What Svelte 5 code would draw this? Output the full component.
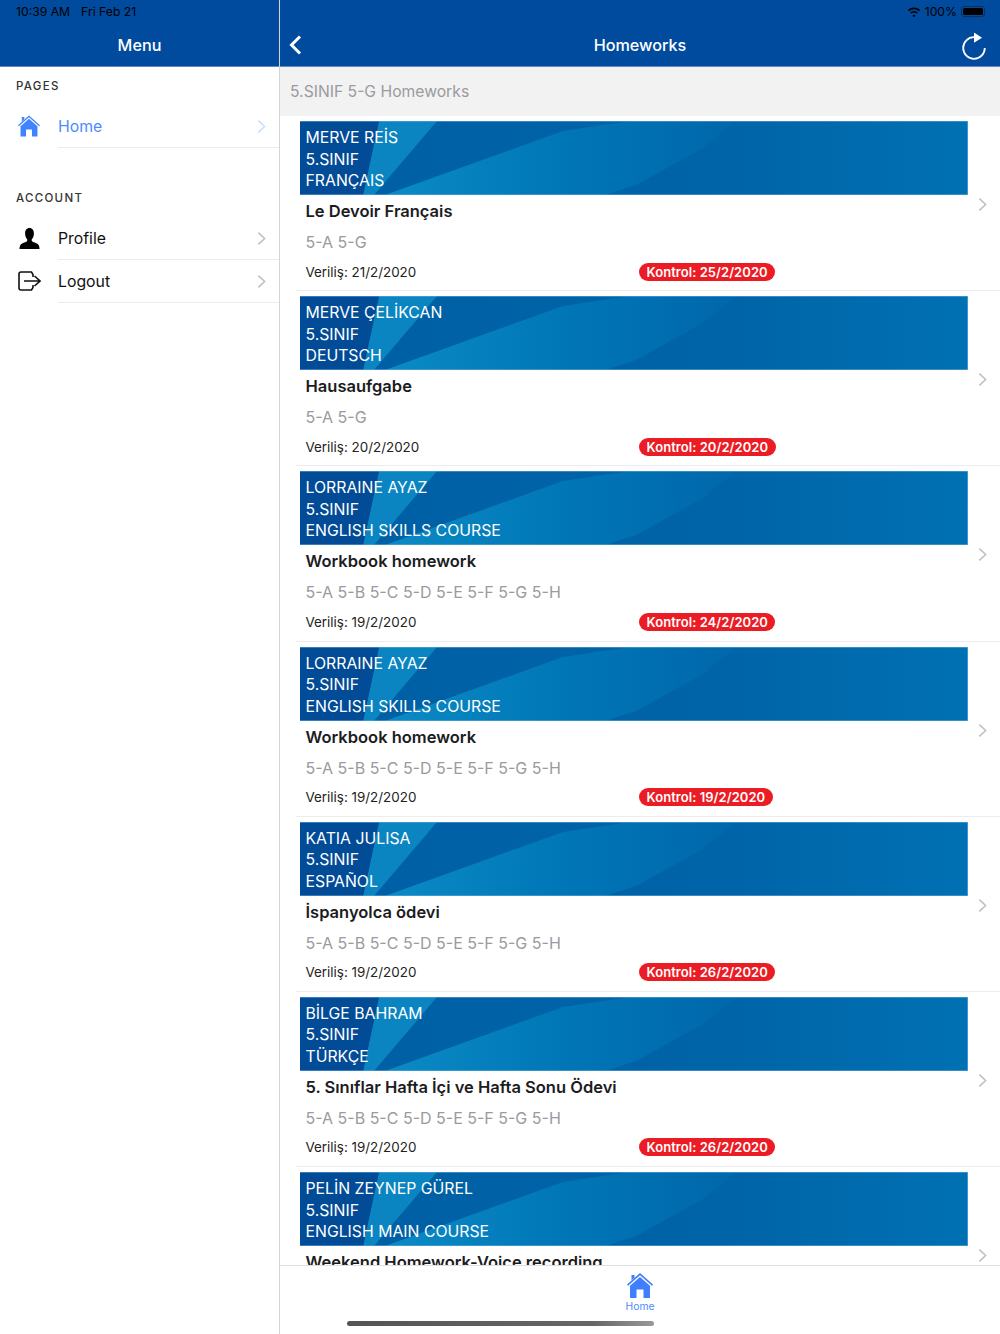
<script>
  const rows = [
    { teacher: 'MERVE REİS', course: 'FRANÇAIS', title: 'Le Devoir Français', classes: '5-A 5-G', given: '21/2/2020', due: '25/2/2020' },
    { teacher: 'MERVE ÇELİKCAN', course: 'DEUTSCH', title: 'Hausaufgabe', classes: '5-A 5-G', given: '20/2/2020', due: '20/2/2020' },
    { teacher: 'LORRAINE AYAZ', course: 'ENGLISH SKILLS COURSE', title: 'Workbook homework', classes: '5-A 5-B 5-C 5-D 5-E 5-F 5-G 5-H', given: '19/2/2020', due: '24/2/2020' },
    { teacher: 'LORRAINE AYAZ', course: 'ENGLISH SKILLS COURSE', title: 'Workbook homework', classes: '5-A 5-B 5-C 5-D 5-E 5-F 5-G 5-H', given: '19/2/2020', due: '19/2/2020' },
    { teacher: 'KATIA JULISA', course: 'ESPAÑOL', title: 'İspanyolca ödevi', classes: '5-A 5-B 5-C 5-D 5-E 5-F 5-G 5-H', given: '19/2/2020', due: '26/2/2020' },
    { teacher: 'BİLGE BAHRAM', course: 'TÜRKÇE', title: '5. Sınıflar Hafta İçi ve Hafta Sonu Ödevi', classes: '5-A 5-B 5-C 5-D 5-E 5-F 5-G 5-H', given: '19/2/2020', due: '26/2/2020' },
    { teacher: 'PELİN ZEYNEP GÜREL', course: 'ENGLISH MAIN COURSE', title: 'Weekend Homework-Voice recording', classes: '5-A 5-B 5-C 5-D 5-E 5-F 5-G 5-H', given: '19/2/2020', due: '26/2/2020' }
  ];
</script>

{#snippet chevron(cls)}
  <svg class={cls} viewBox="0 0 10 16" width="9" height="15" fill="none" stroke="currentColor" stroke-width="1.6"><path d="M1.5 1.5 8.5 8 1.5 14.5" /></svg>
{/snippet}

{#snippet house(cls)}
  <svg class={cls} viewBox="0 0 26 25" fill="currentColor">
    <path d="M4.5 2h3v2.6L4.5 7.4z" />
    <path d="M13 0 26 11.6l-1 1.2L13 2.200 1 12.800 0 11.600z" />
    <path d="M13 4 23 12.800V25H16.500V16.500h-7V25H3V12.800z" />
  </svg>
{/snippet}

<div class="app">
  <aside class="side">
    <header class="bar">
      <div class="status"><span class="time">10:39 AM</span><span>Fri Feb 21</span></div>
      <h1 class="bar-title">Menu</h1>
    </header>

    <div class="section first">PAGES</div>
    <div class="menu-item active">
      <span class="menu-icon">{@render house('icon-house')}</span>
      <div class="menu-body"><span>Home</span>{@render chevron('chev light')}</div>
    </div>

    <div class="section second">ACCOUNT</div>
    <div class="menu-item">
      <span class="menu-icon">
        <svg width="21" height="21" viewBox="0 0 22 22" fill="#000">
          <path d="M11 0c3 0 4.600 2.400 4.600 5.400 0 2.600-.8 4.800-2 6.200-.5.7-.4 2 .4 2.600 1.700 1.100 5.700 1.700 6.900 4.300.4.900.6 2 .6 3.500H.5c0-1.500.2-2.600.6-3.500 1.200-2.600 5.200-3.200 6.900-4.300.8-.6.9-1.900.4-2.600-1.200-1.400-2-3.600-2-6.200C6.400 2.400 8 0 11 0z" />
        </svg>
      </span>
      <div class="menu-body"><span>Profile</span>{@render chevron('chev')}</div>
    </div>
    <div class="menu-item">
      <span class="menu-icon">
        <svg width="23" height="20" viewBox="0 0 23 20" fill="none" stroke="#111" stroke-width="1.600">
          <path d="M15 6V3.500L13.500 1H3Q1 1 1 3V17Q1 19 3 19H13.500L15 16.500V14" />
          <path d="M6 10H21M16.500 5 22 10 16.500 15" />
        </svg>
      </span>
      <div class="menu-body"><span>Logout</span>{@render chevron('chev')}</div>
    </div>
  </aside>

  <main class="main">
    <header class="bar">
      <div class="status right">
        <svg width="14" height="10" viewBox="0 0 14 10" fill="#000">
          <path d="M7 7.500 8.600 9 7 10 5.400 9zM3.200 5.400a5.500 5.500 0 0 1 7.600 0L9.600 6.600a3.800 3.800 0 0 0-5.200 0zM.800 3.100a9 9 0 0 1 12.400 0L12 4.300a7.200 7.200 0 0 0-10 0z" />
        </svg>
        <span>100%</span>
        <span class="battery"><span class="battery-fill"></span></span>
      </div>
      <div class="nav">
        <svg class="back" width="13" height="20" viewBox="0 0 13 20" fill="none" stroke="#fff" stroke-width="3"><path d="M11 1.500 2.500 10 11 18.500" /></svg>
        <h1 class="bar-title">Homeworks</h1>
        <svg class="refresh" width="26" height="28" viewBox="0 0 26 28" fill="none">
          <path d="M13 5.200A10.800 10.800 0 1 0 23.800 16" stroke="#fff" stroke-width="1.800" />
          <path d="M13 .5 21 5.700 13 10.700z" fill="#fff" />
        </svg>
      </div>
    </header>

    <div class="sub">5.SINIF 5-G Homeworks</div>

    <div class="list">
      {#each rows as r}
        <article class="row">
          <div class="content">
            <div class="banner">
              <svg class="art" viewBox="0 0 668 74" preserveAspectRatio="none">
                <defs>
                  <linearGradient id="band" gradientUnits="userSpaceOnUse" x1="90" x2="440" y1="0" y2="0">
                    <stop offset="0" stop-color="#0a8ac5" />
                    <stop offset="0.5" stop-color="#0076b6" />
                    <stop offset="1" stop-color="#0067ab" />
                  </linearGradient>
                  <linearGradient id="base" x1="0" x2="1" y1="0" y2="0">
                    <stop offset="0" stop-color="#005fa6" />
                    <stop offset="0.65" stop-color="#0064a8" />
                    <stop offset="1" stop-color="#0071b3" />
                  </linearGradient>
                </defs>
                <rect width="668" height="74" fill="url(#base)" />
                <polygon points="85,74 263,10 330,0 436,0 403,27 336,64 305,74" fill="url(#band)" />
                <polygon points="79,0 137,0 74,74 63,74" fill="#0a85c1" />
                <polygon points="0,0 79,0 63,74 0,74" fill="#014b97" />
              </svg>
              <div class="banner-text">
                <div>{r.teacher}</div>
                <div>5.SINIF</div>
                <div>{r.course}</div>
              </div>
            </div>
            <div class="title">{r.title}</div>
            <div class="classes">{r.classes}</div>
            <div class="meta">
              <span class="given">Veriliş: {r.given}</span>
              <span class="badge">Kontrol: {r.due}</span>
            </div>
          </div>
          {@render chevron('chev row-chev')}
        </article>
      {/each}
    </div>

    <nav class="tabbar">
      <div class="tab">
        {@render house('tab-house')}
        <span>Home</span>
      </div>
      <div class="home-indicator"></div>
    </nav>
  </main>
</div>

<style>
  :global(body) { margin: 0; background: #fff; }
  .app {
    display: flex;
    width: 1000px;
    height: 1334px;
    overflow: hidden;
    font-family: Inter, "Noto Sans", sans-serif;
    color: #1a1a1a;
    background: #fff;
  }
  h1 { margin: 0; }

  .bar {
    height: 66px;
    background: #004b9d;
    border-bottom: 1px solid #5f8abf;
    flex: none;
    display: flex;
    flex-direction: column;
  }
  .status {
    height: 23px;
    display: flex;
    align-items: center;
    padding: 0 16px;
    font-size: 12.200px;
    color: #000;
    gap: 11px;
    flex: none;
  }
  .status.right { justify-content: flex-end; gap: 4px; padding: 0 15px 0 0; }
  .battery {
    width: 24px;
    height: 11px;
    border: 1px solid #0b2f63;
    border-radius: 3px;
    padding: 1px;
    box-sizing: border-box;
    display: flex;
  }
  .battery-fill { flex: 1; background: #000; border-radius: 1.500px; }
  .bar-title {
    font-size: 16.200px;
    font-weight: 500;
    color: #fff;
    text-align: center;
    line-height: 44px;
  }

  .side {
    width: 279px;
    flex: none;
    border-right: 1px solid #d4d4d6;
    position: relative;
  }
  .section {
    font-size: 11.500px;
    font-weight: 500;
    letter-spacing: 1.300px;
    color: #333;
    padding-left: 16px;
    line-height: 16px;
  }
  .section.first { margin-top: 11px; margin-bottom: 11px; }
  .section.second { margin-top: 42px; margin-bottom: 11px; }
  .menu-item {
    display: flex;
    height: 43px;
    font-size: 15.800px;
    color: #111;
  }
  .menu-item.active { color: #4c8cff; }
  .menu-icon {
    width: 58px;
    flex: none;
    display: flex;
    align-items: center;
    justify-content: center;
    box-sizing: border-box;
    padding-bottom: 1px;
  }
  .icon-house { width: 22px; height: 22px; color: #3f83ff; }
  .menu-body {
    flex: 1;
    display: flex;
    align-items: center;
    justify-content: space-between;
    border-bottom: 1px solid #ececee;
    padding-right: 13px;
  }
  .chev { color: #bdbdc2; flex: none; }
  .chev.light { color: #c8dcff; }

  .main {
    flex: 1;
    min-width: 0;
    display: flex;
    flex-direction: column;
  }
  .nav {
    flex: 1;
    display: flex;
    align-items: center;
    justify-content: center;
    position: relative;
    margin-top: -1px;
    padding-top: 1px;
  }
  .back { position: absolute; left: 9px; top: 13px; }
  .refresh { position: absolute; right: 13px; top: 10px; }

  .sub {
    flex: none;
    height: 49px;
    line-height: 49px;
    background: #f2f2f2;
    color: #9a9aa0;
    font-size: 15.700px;
    padding-left: 10px;
  }
  .list { flex: 1; min-height: 0; overflow: hidden; }
  .row {
    height: 175.200px;
    box-sizing: border-box;
    margin-left: 16px;
    padding: 5px 0 0 4px;
    border-bottom: 1px solid #ececee;
    display: flex;
    align-items: flex-start;
    position: relative;
  }
  .content { width: 668px; flex: none; }
  .row-chev { position: absolute; right: 13px; top: 81px; }
  .banner {
    height: 74px;
    position: relative;
    color: #fff;
    font-size: 15.800px;
    line-height: 21.500px;
  }
  .banner::after {
    content: "";
    position: absolute;
    inset: 0;
    box-shadow: inset 0 1px 0 rgba(110, 175, 225, .5), inset -1px 0 0 rgba(110, 175, 225, .6), inset 0 -1px 0 rgba(110, 175, 225, .5);
  }
  .art { position: absolute; inset: 0; width: 100%; height: 100%; display: block; }
  .banner-text { position: relative; padding: 6px 0 0 5.500px; }
  .title {
    font-size: 16.500px;
    font-weight: 600;
    line-height: 22px;
    padding: 5px 0 0 5.500px;
    color: #1c1c1e;
  }
  .classes {
    font-size: 16px;
    line-height: 22px;
    padding: 9px 0 0 5.500px;
    color: #9a9aa0;
  }
  .meta {
    display: flex;
    align-items: center;
    padding: 9px 0 0 5.500px;
    height: 19px;
  }
  .given { font-size: 13.400px; width: 333.500px; flex: none; color: #222; }
  .badge {
    background: #ec1c24;
    color: #fff;
    font-size: 13px;
    font-weight: 600;
    letter-spacing: .05px;
    line-height: 18px;
    height: 18px;
    padding: 0 7.500px;
    border-radius: 9px;
  }

  .tabbar {
    height: 69px;
    flex: none;
    border-top: 1px solid #e0e0e2;
    background: #fff;
    box-sizing: border-box;
    position: relative;
    margin-top: -1px;
  }
  .tab {
    display: flex;
    flex-direction: column;
    align-items: center;
    color: #4c8cff;
    font-size: 10.300px;
    padding-top: 7px;
    line-height: 13px;
    gap: 2px;
  }
  .tab-house { width: 26px; height: 25px; color: #3f7fff; display: block; }
  .home-indicator {
    position: absolute;
    left: 67px;
    bottom: 8px;
    width: 307px;
    height: 5px;
    border-radius: 3px;
    background: linear-gradient(90deg, #555, #666 80%, #999);
  }
</style>
